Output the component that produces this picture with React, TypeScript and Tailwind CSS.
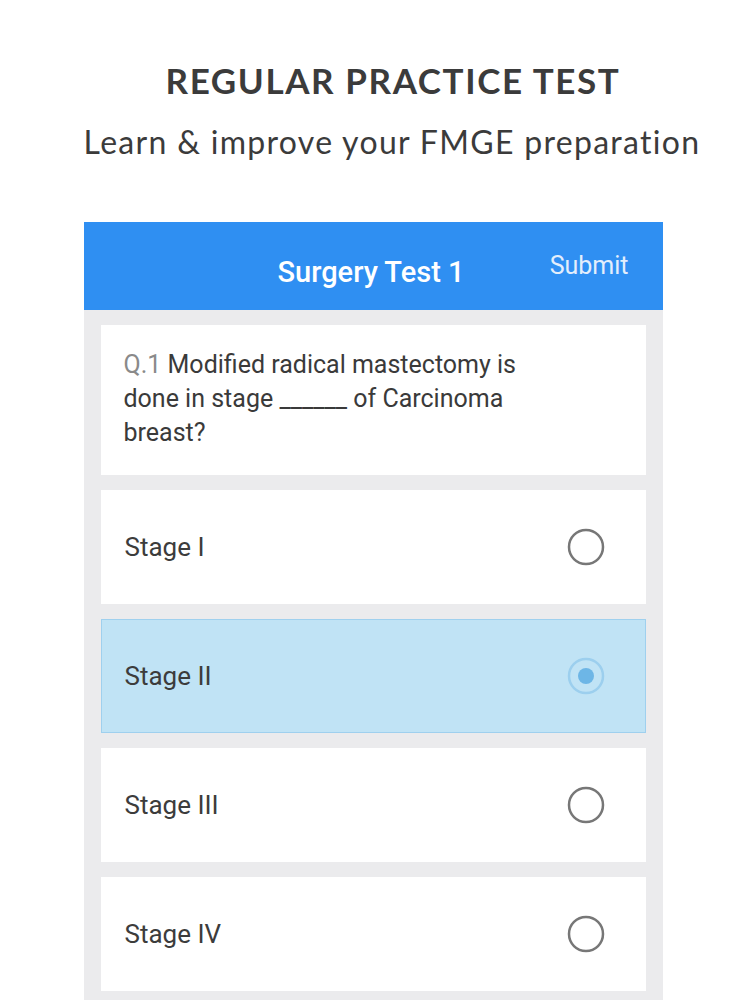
import React from "react";

const options = ["Stage I", "Stage II", "Stage III", "Stage IV"];

function Radio({ selected }: { selected: boolean }) {
  if (selected) {
    return (
      <svg width="40" height="40" viewBox="0 0 40 40">
        <circle cx="20" cy="20" r="17" fill="none" stroke="#9ccfee" strokeWidth="2.5" />
        <circle cx="20" cy="20" r="8" fill="#6db6e6" />
      </svg>
    );
  }
  return (
    <svg width="40" height="40" viewBox="0 0 40 40">
      <circle cx="20" cy="20" r="17" fill="none" stroke="#777777" strokeWidth="2.5" />
    </svg>
  );
}

export default function App() {
  return (
    <div className="w-[750px] h-[1000px] bg-white overflow-hidden flex flex-col items-center">
      <h1
        className="mt-[60px] text-[35px] leading-[40px] font-bold text-[#3b3b3b] tracking-[1.6px] ml-[36px]"
        style={{ fontFamily: "Lato, 'Open Sans', sans-serif" }}
      >
        REGULAR PRACTICE TEST
      </h1>
      <p
        className="mt-[22px] text-[32px] leading-[40px] text-[#3b3b3b] tracking-[1.3px] ml-[34px]"
        style={{ fontFamily: "Lato, 'Open Sans', sans-serif" }}
      >
        Learn &amp; improve your FMGE preparation
      </p>
      <div
        className="mt-[60px] ml-[-4px] w-[579px] flex-1 bg-[#ebebed] flex flex-col"
        style={{ fontFamily: "Roboto, 'Noto Sans', sans-serif" }}
      >
        <div className="h-[88px] bg-[#2f8ff2] relative">
          <span className="absolute left-0 right-0 text-center top-[33px] ml-[-4px] text-[29px] leading-[34px] font-medium text-white">
            Surgery Test 1
          </span>
          <span className="absolute right-[34px] top-[29px] text-[25px] leading-[30px] text-[#e3eefc]">
            Submit
          </span>
        </div>
        <div className="px-[17px] pt-[15px] flex flex-col gap-[15px]">
          <div className="bg-white h-[150px] px-[23px] pt-[23px] text-[25px] leading-[34px] text-[#3a3a3a]">
            <span className="text-[#8a8a8a]">Q.1</span> Modified radical mastectomy is
            <br />
            done in stage ______ of Carcinoma
            <br />
            breast?
          </div>
          {options.map((o, i) => {
            const sel = i === 1;
            return (
              <div
                key={o}
                className={
                  sel
                    ? "h-[114px] bg-[#c0e3f5] border border-[#9fd0ee] flex items-center justify-between pl-[23px] pr-[39px]"
                    : "h-[114px] bg-white border border-transparent flex items-center justify-between pl-[23px] pr-[39px]"
                }
              >
                <span className="text-[26px] leading-[30px] text-[#3c3c3c]">{o}</span>
                <Radio selected={sel} />
              </div>
            );
          })}
        </div>
      </div>
    </div>
  );
}
